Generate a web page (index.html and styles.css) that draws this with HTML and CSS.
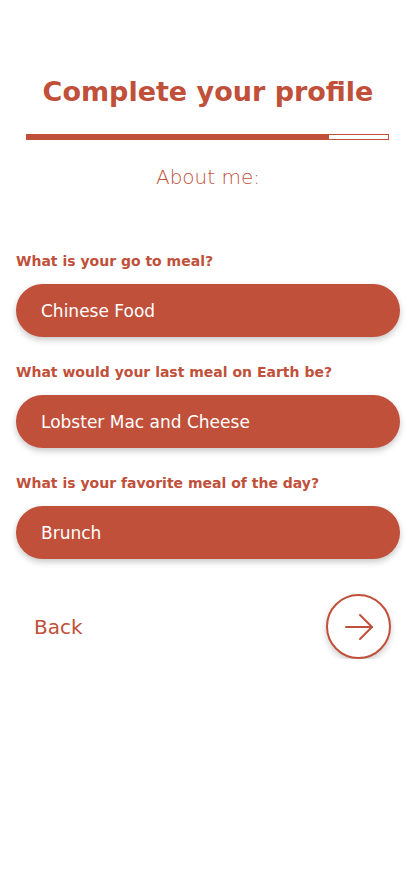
FILE: index.html
```html
<!DOCTYPE html>
<html lang="en">
<head>
<meta charset="utf-8">
<title>Complete your profile</title>
<link rel="stylesheet" href="styles.css">
</head>
<body>
<main class="page">
  <h1 class="title">Complete your profile</h1>
  <div class="progress"><div class="progress-fill"></div><div class="progress-rest"></div></div>
  <p class="subtitle">About me:</p>

  <section class="question">
    <label class="q-label">What is your go to meal?</label>
    <div class="pill">Chinese Food</div>
  </section>
  <section class="question">
    <label class="q-label">What would your last meal on Earth be?</label>
    <div class="pill">Lobster Mac and Cheese</div>
  </section>
  <section class="question">
    <label class="q-label">What is your favorite meal of the day?</label>
    <div class="pill">Brunch</div>
  </section>

  <div class="nav">
    <span class="back">Back</span>
    <button class="next" aria-label="Next">
      <svg width="32" height="32" viewBox="0 0 32 32" fill="none" stroke="#c0503a" stroke-width="2" stroke-linecap="round" stroke-linejoin="round">
        <path d="M3 16 H29"/>
        <path d="M17 4 L29 16 L17 28"/>
      </svg>
    </button>
  </div>
</main>
</body>
</html>
```
FILE: styles.css
```css
* { box-sizing: border-box; }
html, body { margin: 0; padding: 0; background: #fff; }
body {
  font-family: "DejaVu Sans", "Open Sans", sans-serif;
  color: #c0503a;
}
.page {
  width: 414px;
  padding: 74px 14px 0 16px;
  display: flex;
  flex-direction: column;
}
.title {
  margin: 0;
  font-size: 27px;
  line-height: 36px;
  font-weight: 700;
  text-align: center;
}
.progress {
  width: 363px;
  height: 6px;
  margin: 24px 0 0 10px;
  display: flex;
}
.progress-fill { width: 302px; height: 6px; background: #c0503a; }
.progress-rest { flex: 1; height: 6px; border: 1px solid #c0503a; background: #fff; }
.subtitle {
  margin: 25px 0 0;
  font-size: 20px;
  line-height: 24px;
  font-weight: 300;
  text-align: center;
}
.question { display: flex; flex-direction: column; }
.question:first-of-type { margin-top: 63px; }
.question + .question { margin-top: 26px; }
.q-label {
  font-size: 14px;
  line-height: 18px;
  font-weight: 700;
}
.pill {
  margin-top: 14px;
  height: 53px;
  width: 384px;
  border-radius: 27px;
  background: #c0503a;
  color: #fff;
  font-size: 17px;
  padding-left: 25px;
  display: flex;
  align-items: center;
  box-shadow: 0 3px 6px rgba(0,0,0,0.22);
}
.nav {
  margin-top: 35px;
  display: flex;
  align-items: center;
  justify-content: space-between;
  padding: 0 9px 0 18px;
}
.back { font-size: 20px; line-height: 22px; }
.next {
  width: 65px;
  height: 65px;
  border-radius: 50%;
  border: 2px solid #c0503a;
  background: #fff;
  padding: 0;
  display: flex;
  align-items: center;
  justify-content: center;
  box-shadow: 0 3px 6px rgba(0,0,0,0.2);
}
```
